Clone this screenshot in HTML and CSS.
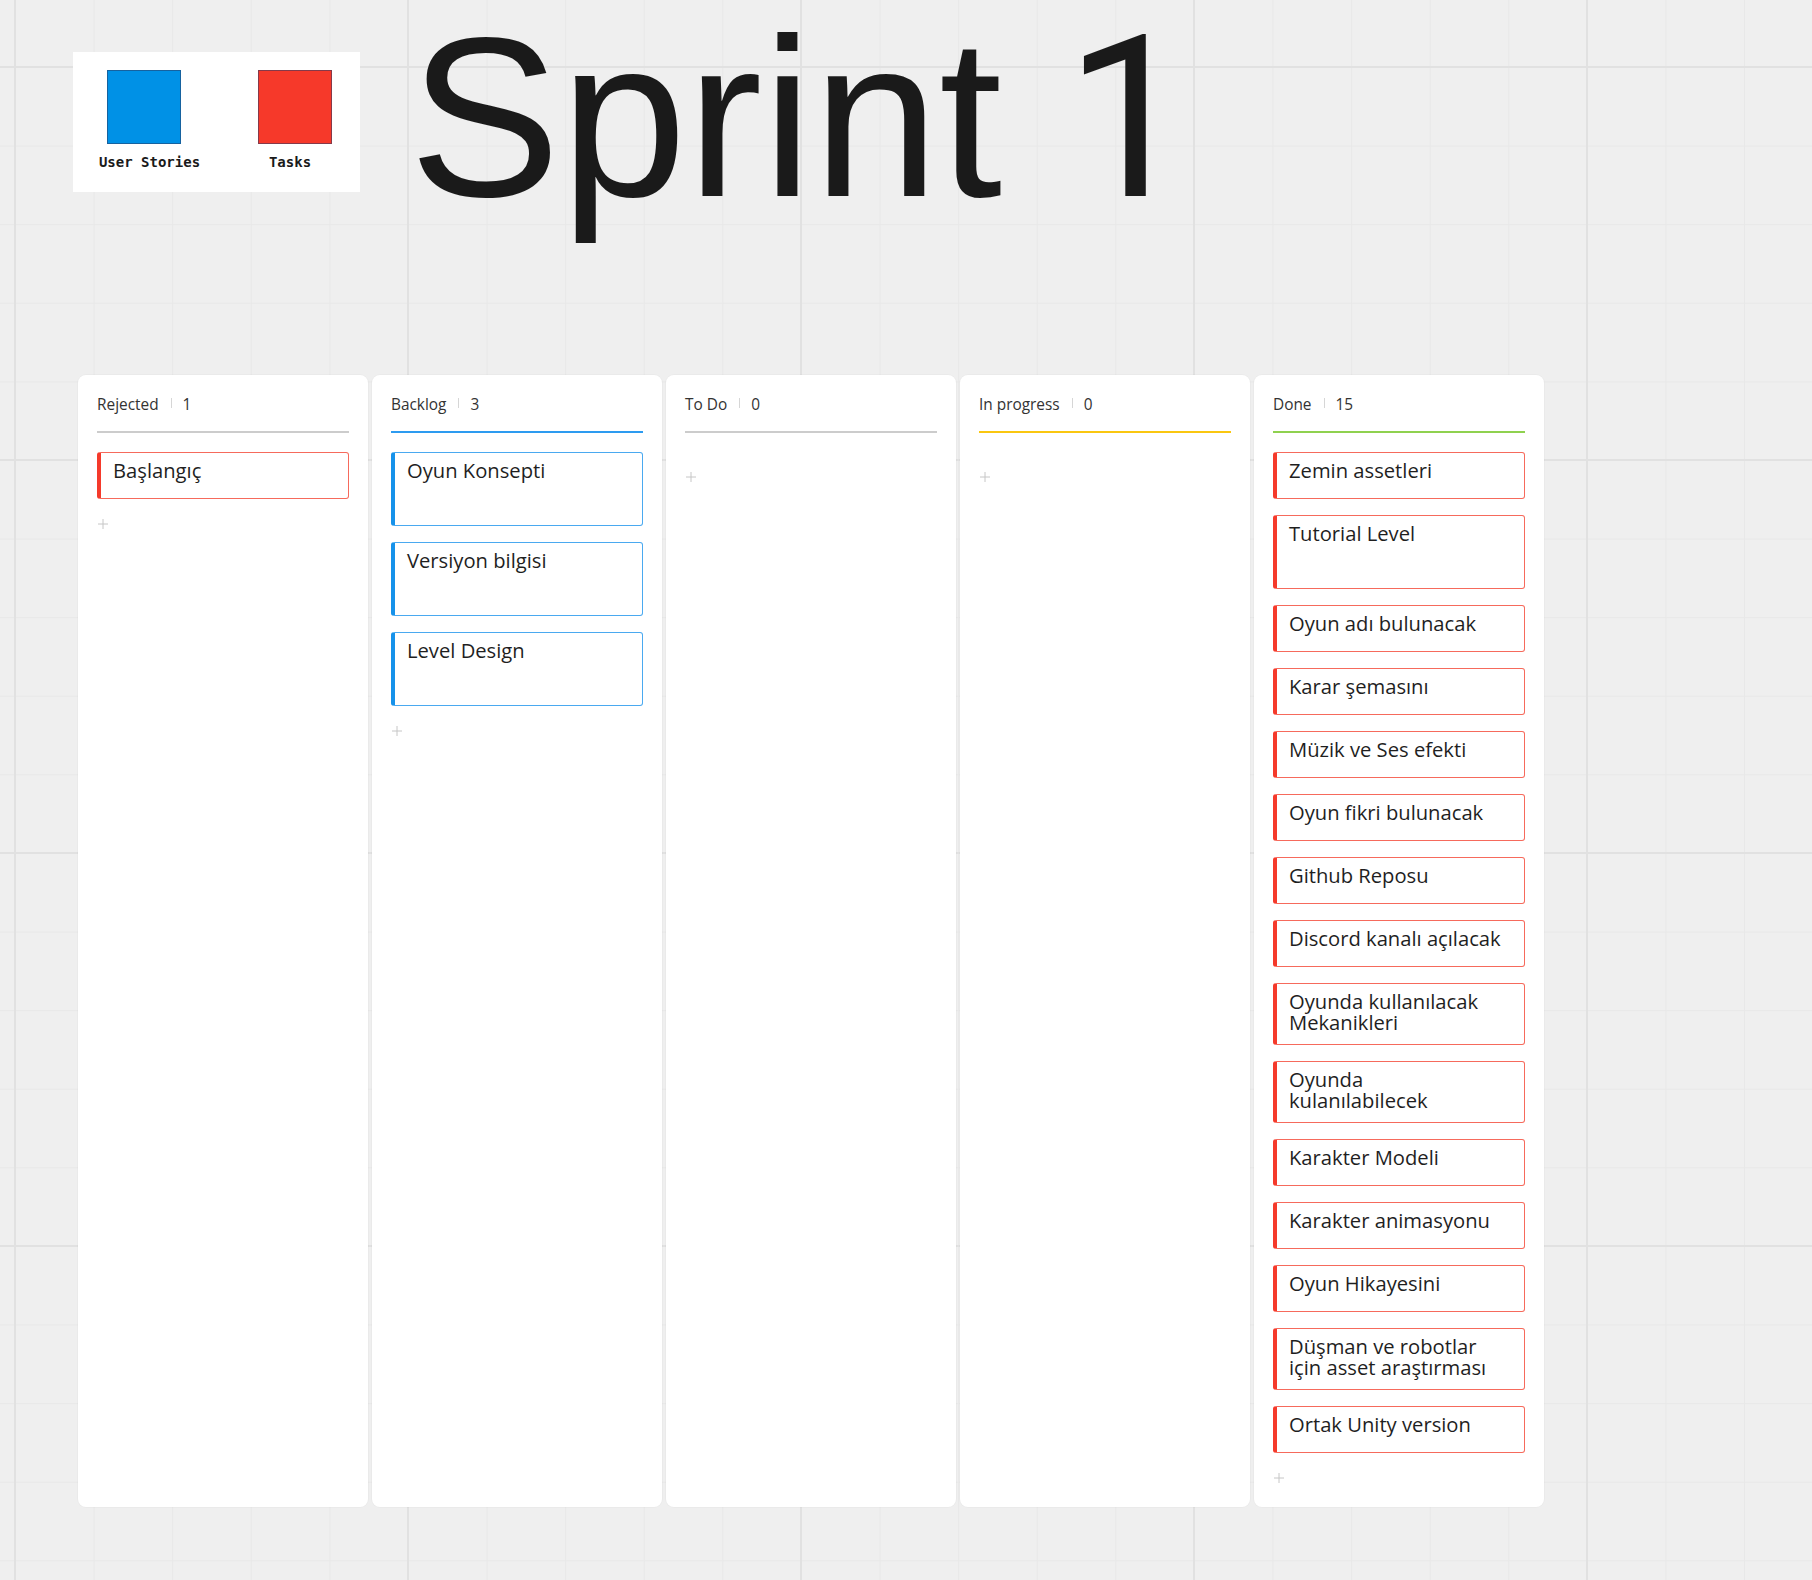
FILE: index.html
```html
<!DOCTYPE html>
<html lang="tr">
<head>
<meta charset="utf-8">
<title>Sprint 1</title>
<link rel="stylesheet" href="styles.css">
</head>
<body>
<div class="top">
  <div class="legend">
    <div class="legend-item">
      <div class="swatch swatch-blue"></div>
      <div class="legend-label label-stories">User Stories</div>
    </div>
    <div class="legend-item">
      <div class="swatch swatch-red"></div>
      <div class="legend-label label-tasks">Tasks</div>
    </div>
  </div>
  <h1 class="title">Sprint <span class="title-num">1</span></h1>
</div>

<div class="board">
  <section class="column">
    <header class="col-head line-gray"><span class="col-name">Rejected</span><span class="sep"></span><span class="count">1</span></header>
    <div class="cards">
      <div class="card red">Başlangıç</div>
    </div>
    <div class="add"><svg width="10" height="10" viewBox="0 0 10 10"><path d="M5 0v10M0 5h10" stroke="#c6c6c6" stroke-width="1"/></svg></div>
  </section>

  <section class="column">
    <header class="col-head line-blue"><span class="col-name">Backlog</span><span class="sep"></span><span class="count">3</span></header>
    <div class="cards">
      <div class="card blue tall">Oyun Konsepti</div>
      <div class="card blue tall">Versiyon bilgisi</div>
      <div class="card blue tall">Level Design</div>
    </div>
    <div class="add"><svg width="10" height="10" viewBox="0 0 10 10"><path d="M5 0v10M0 5h10" stroke="#c6c6c6" stroke-width="1"/></svg></div>
  </section>

  <section class="column">
    <header class="col-head line-gray"><span class="col-name">To Do</span><span class="sep"></span><span class="count">0</span></header>
    <div class="cards"></div>
    <div class="add"><svg width="10" height="10" viewBox="0 0 10 10"><path d="M5 0v10M0 5h10" stroke="#c6c6c6" stroke-width="1"/></svg></div>
  </section>

  <section class="column">
    <header class="col-head line-yellow"><span class="col-name">In progress</span><span class="sep"></span><span class="count">0</span></header>
    <div class="cards"></div>
    <div class="add"><svg width="10" height="10" viewBox="0 0 10 10"><path d="M5 0v10M0 5h10" stroke="#c6c6c6" stroke-width="1"/></svg></div>
  </section>

  <section class="column">
    <header class="col-head line-green"><span class="col-name">Done</span><span class="sep"></span><span class="count">15</span></header>
    <div class="cards">
      <div class="card red">Zemin assetleri</div>
      <div class="card red tall">Tutorial Level</div>
      <div class="card red">Oyun adı bulunacak</div>
      <div class="card red">Karar şemasını</div>
      <div class="card red">Müzik ve Ses efekti</div>
      <div class="card red">Oyun fikri bulunacak</div>
      <div class="card red">Github Reposu</div>
      <div class="card red">Discord kanalı açılacak</div>
      <div class="card red">Oyunda kullanılacak<br>Mekanikleri</div>
      <div class="card red">Oyunda<br>kulanılabilecek</div>
      <div class="card red">Karakter Modeli</div>
      <div class="card red">Karakter animasyonu</div>
      <div class="card red">Oyun Hikayesini</div>
      <div class="card red">Düşman ve robotlar<br>için asset araştırması</div>
      <div class="card red">Ortak Unity version</div>
    </div>
    <div class="add"><svg width="10" height="10" viewBox="0 0 10 10"><path d="M5 0v10M0 5h10" stroke="#c6c6c6" stroke-width="1"/></svg></div>
  </section>
</div>
</body>
</html>
```

FILE: styles.css
```css
html, body {
  margin: 0;
  padding: 0;
}

body {
  width: 1812px;
  min-height: 1580px;
  background:
    linear-gradient(90deg, #e1e1e1 2px, transparent 2px) 14px 0 / 393px 100% repeat-x,
    linear-gradient(#e1e1e1 2px, transparent 2px) 0 66px / 100% 393px repeat-y,
    linear-gradient(90deg, #e8e8e8 1px, transparent 1px) 15px 0 / 78.6px 100%,
    linear-gradient(#e8e8e8 1px, transparent 1px) 0 67px / 100% 78.6px,
    #efefef;
  font-family: "Open Sans", "Noto Sans", sans-serif;
  color: #1f1f1f;
}

/* ---------- top area ---------- */
.top {
  height: 375px;
  box-sizing: border-box;
  padding: 4px 0 0 73px;
  display: flex;
  align-items: flex-start;
}

.legend {
  margin-top: 48px;
  width: 287px;
  height: 140px;
  box-sizing: border-box;
  background: #ffffff;
  padding: 18px 0 0 34px;
  display: flex;
  gap: 77px;
}

.legend-item {
  width: 74px;
  display: flex;
  flex-direction: column;
  align-items: center;
}

.swatch {
  width: 74px;
  height: 74px;
  box-sizing: border-box;
  border: 1px solid rgba(40, 60, 100, 0.55);
}

.swatch-blue { background: #0091e6; }
.swatch-red { background: #f6392a; }

.legend-label {
  margin-top: 10px;
  font-family: "DejaVu Sans Mono", "Liberation Mono", monospace;
  font-weight: 700;
  font-size: 14px;
  line-height: 16px;
  color: #1a1a1a;
  white-space: nowrap;
}

.label-stories { margin-left: 11px; }
.label-tasks { margin-right: 10px; }

.title {
  margin: 0 0 0 49px;
  font-family: "Liberation Sans", Arial, sans-serif;
  font-weight: 400;
  font-size: 227px;
  line-height: 1;
  color: #1a1a1a;
  white-space: nowrap;
}

.title-num {
  font-family: Roboto, "Liberation Sans", sans-serif;
}

/* ---------- board ---------- */
.board {
  margin-left: 78px;
  display: flex;
  gap: 4px;
  align-items: flex-start;
}

.column {
  width: 290px;
  height: 1132px;
  box-sizing: border-box;
  background: #ffffff;
  border-radius: 8px;
  padding: 0 19px;
  box-shadow: 0 0 0 1px rgba(0, 0, 0, 0.02);
}

.col-head {
  display: flex;
  align-items: center;
  padding: 20px 0 16px;
  font-size: 15.4px;
  line-height: 20px;
  color: #333333;
  border-bottom: 2px solid #c8c8c8;
}

.line-gray { border-bottom-color: #cccccc; }
.line-blue { border-bottom-color: #2d9bf0; }
.line-yellow { border-bottom-color: #fac710; }
.line-green { border-bottom-color: #8fd14f; }

.sep {
  width: 1px;
  height: 10px;
  background: #d6d6d6;
  margin: 3px 11px 0 12px;
  align-self: flex-start;
}

.cards {
  margin-top: 19px;
  display: flex;
  flex-direction: column;
  gap: 16px;
}

.card {
  min-height: 47px;
  box-sizing: border-box;
  padding: 7px 14px 11px 12px;
  border: 1px solid;
  border-left-width: 4px;
  border-radius: 3px;
  font-size: 20.2px;
  line-height: 21px;
  color: #1f1f1f;
  background: #ffffff;
}

.card.tall { min-height: 74px; }

.card.red {
  border-color: #f66a5c;
  border-left-color: #f53a2b;
}

.card.blue {
  border-color: #4aa9f0;
  border-left-color: #1692ea;
}

.add {
  margin-top: 20px;
  margin-left: 1px;
  height: 10px;
  line-height: 0;
}
```
